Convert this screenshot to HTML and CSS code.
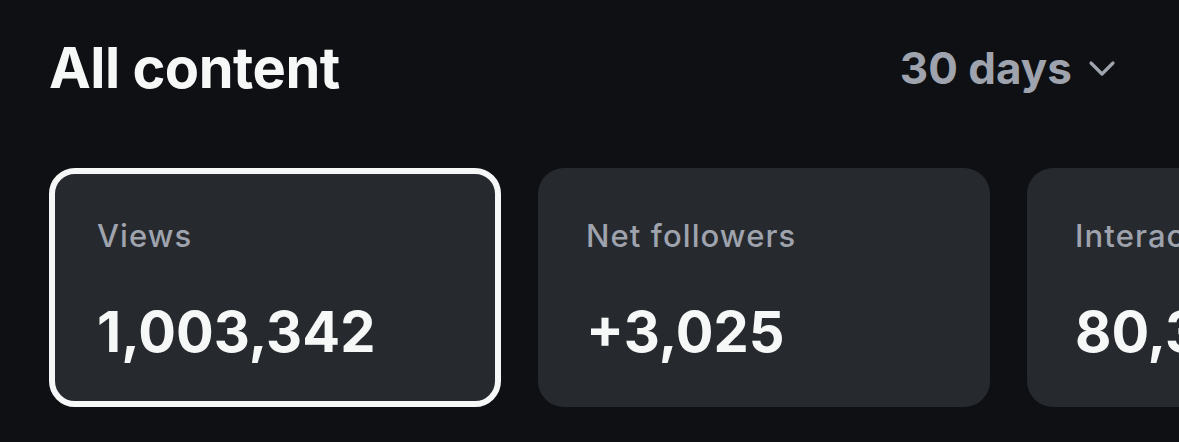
FILE: index.html
```html
<!DOCTYPE html>
<html lang="en">
<head>
    <meta charset="UTF-8" />
    <title>All content</title>
    <link rel="stylesheet" href="styles.css">
</head>
<body>
    <div class="insights">
        <div class="insights-header">
            <h1>All content</h1>
            <button class="range">30 days
                <svg width="28" height="18" viewBox="0 0 28 18" fill="none">
                    <path d="M3 4l11 11L25 4" stroke="currentColor" stroke-width="3.2" stroke-linecap="round" stroke-linejoin="round"/>
                </svg>
            </button>
        </div>

        <div class="stats">
            <div class="stat active">
                <p class="stat-label">Views</p>
                <p class="stat-value">1,003,342</p>
            </div>
            <div class="stat">
                <p class="stat-label">Net followers</p>
                <p class="stat-value">+3,025</p>
            </div>
            <div class="stat">
                <p class="stat-label">Interactions</p>
                <p class="stat-value">80,391</p>
            </div>
        </div>
    </div>
</body>
</html>
```

FILE: styles.css
```css
* {
    margin: 0;
    padding: 0;
    box-sizing: border-box;
    font-family: Inter, 'Noto Sans', sans-serif;
}

body {
    background: #0e1014;
    color: #f6f8f8;
    height: 100vh;
    overflow: hidden;
}

.insights {
    padding: 34px 0 0 49px;
}

.insights-header {
    display: flex;
    justify-content: space-between;
    align-items: center;
    padding-right: 63px;
}

.insights-header h1 {
    font-size: 56px;
    font-weight: 700;
    letter-spacing: -0.5px;
}

.range {
    display: flex;
    align-items: center;
    gap: 16px;
    background: none;
    border: none;
    color: #9ea3ad;
    font-size: 44px;
    font-weight: 700;
    cursor: pointer;
}

/* row of stat cards, the last one runs off the edge */
.stats {
    display: flex;
    gap: 37px;
    margin-top: 66px;
}

.stat {
    flex: 0 0 452px;
    height: 239px;
    background: #26292e;
    border: 6px solid transparent;
    border-radius: 26px;
    padding: 43px 42px;
}

.stat.active {
    border-color: #f6f8f8;
}

.stat-label {
    color: #9ea3ad;
    font-size: 31px;
    font-weight: 500;
    letter-spacing: 1.1px;
}

.stat-value {
    margin-top: 44px;
    font-size: 56px;
    font-weight: 700;
}
```
